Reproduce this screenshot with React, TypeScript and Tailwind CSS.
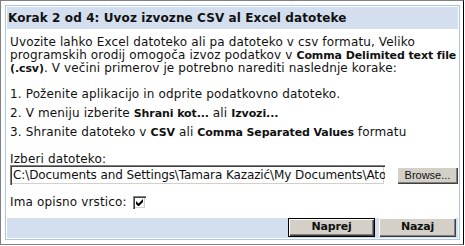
import React from "react";

const raised =
  "bg-[#d4d0c8] shadow-[inset_1px_1px_0_#ffffff,inset_-1px_-1px_0_#404040,inset_-2px_-2px_0_#808080]";

const sunken =
  "bg-white shadow-[inset_1px_1px_0_#808080,inset_2px_2px_0_#404040,inset_-1px_-1px_0_#ffffff,inset_-2px_-2px_0_#d4d0c8]";

const B: React.FC<{ children: React.ReactNode }> = ({ children }) => (
  <b className="font-bold text-[11px] tracking-[-0.1px]">{children}</b>
);

const App: React.FC = () => {
  return (
    <div
      className="w-[465px] h-[246px] bg-white text-[12px] tracking-[0.14px] text-[#111]"
      style={{ fontFamily: '"DejaVu Sans", Verdana, sans-serif' }}
    >
      <div className="w-[464px] h-[245px] flex border border-[#808080] border-r-black pl-1 pr-[3px] py-1">
        <div className="flex-1 min-w-0 flex flex-col border border-[#a9c7e7] p-px">
          {/* header */}
          <div className="h-[22px] shrink-0 flex items-center px-[1px] bg-[#d3dfee] font-bold tracking-[0.1px] whitespace-nowrap">
            Korak 2 od 4: Uvoz izvozne CSV al Excel datoteke
          </div>

          {/* body */}
          <div className="flex-1 min-w-0 flex flex-col pl-[3px] pt-[7px]">
            <p className="leading-[13px] whitespace-nowrap">
              Uvozite lahko Excel datoteko ali pa datoteko v csv formatu, Veliko
              <br />
              programskih orodij omogoča izvoz podatkov v{" "}
              <B>Comma Delimited text file</B>
              <br />
              <B>(.csv)</B>. V večini primerov je potrebno narediti naslednje
              korake:
            </p>
            <ol className="mt-[13px] flex flex-col gap-[6px] leading-[13px] whitespace-nowrap">
              <li>1. Poženite aplikacijo in odprite podatkovno datoteko.</li>
              <li>
                2. V meniju izberite <B>Shrani kot...</B> ali <B>Izvozi...</B>
              </li>
              <li>
                3. Shranite datoteko v <B>CSV</B> ali{" "}
                <B>Comma Separated Values</B> formatu
              </li>
            </ol>

            <div className="mt-[14px] leading-[12px]">Izberi datoteko:</div>
            <div className="flex items-center gap-[12px]">
              <div
                className={`flex-1 min-w-0 h-[20px] flex items-center px-[3px] overflow-hidden whitespace-nowrap tracking-[-0.1px] ${sunken}`}
              >
                C:\Documents and Settings\Tamara Kazazić\My Documents\Atol\izvoz.csv
              </div>
              <button
                className={`w-[61px] h-[17px] shrink-0 text-[11px] tracking-normal leading-none ${raised}`}
                style={{ fontFamily: '"Liberation Sans", Arial, sans-serif' }}
              >
                Browse...
              </button>
            </div>

            <div className="mt-[11px] h-[13px] flex items-center">
              <span className="w-[123px] shrink-0 leading-[13px] whitespace-nowrap">
                Ima opisno vrstico:
              </span>
              <span
                className={`w-[13px] h-[13px] flex items-center justify-center ${sunken}`}
              >
                <svg width="7" height="7" viewBox="0 0 7 7">
                  <path d="M0 2v3l2 2h1l4-4V0L2.5 4.5z" fill="#000" />
                </svg>
              </span>
            </div>
          </div>

          {/* footer */}
          <div className="h-[20px] shrink-0 flex justify-end items-start gap-[4px] pr-[2px] bg-[#d3dfee]">
            <button
              className={`w-[87px] h-[19px] text-[11px] font-bold tracking-[-0.2px] border border-black ${raised}`}
            >
              Naprej
            </button>
            <button
              className={`w-[77px] h-[19px] text-[11px] font-bold tracking-[-0.2px] ${raised}`}
            >
              Nazaj
            </button>
          </div>
        </div>
      </div>
    </div>
  );
};

export default App;
